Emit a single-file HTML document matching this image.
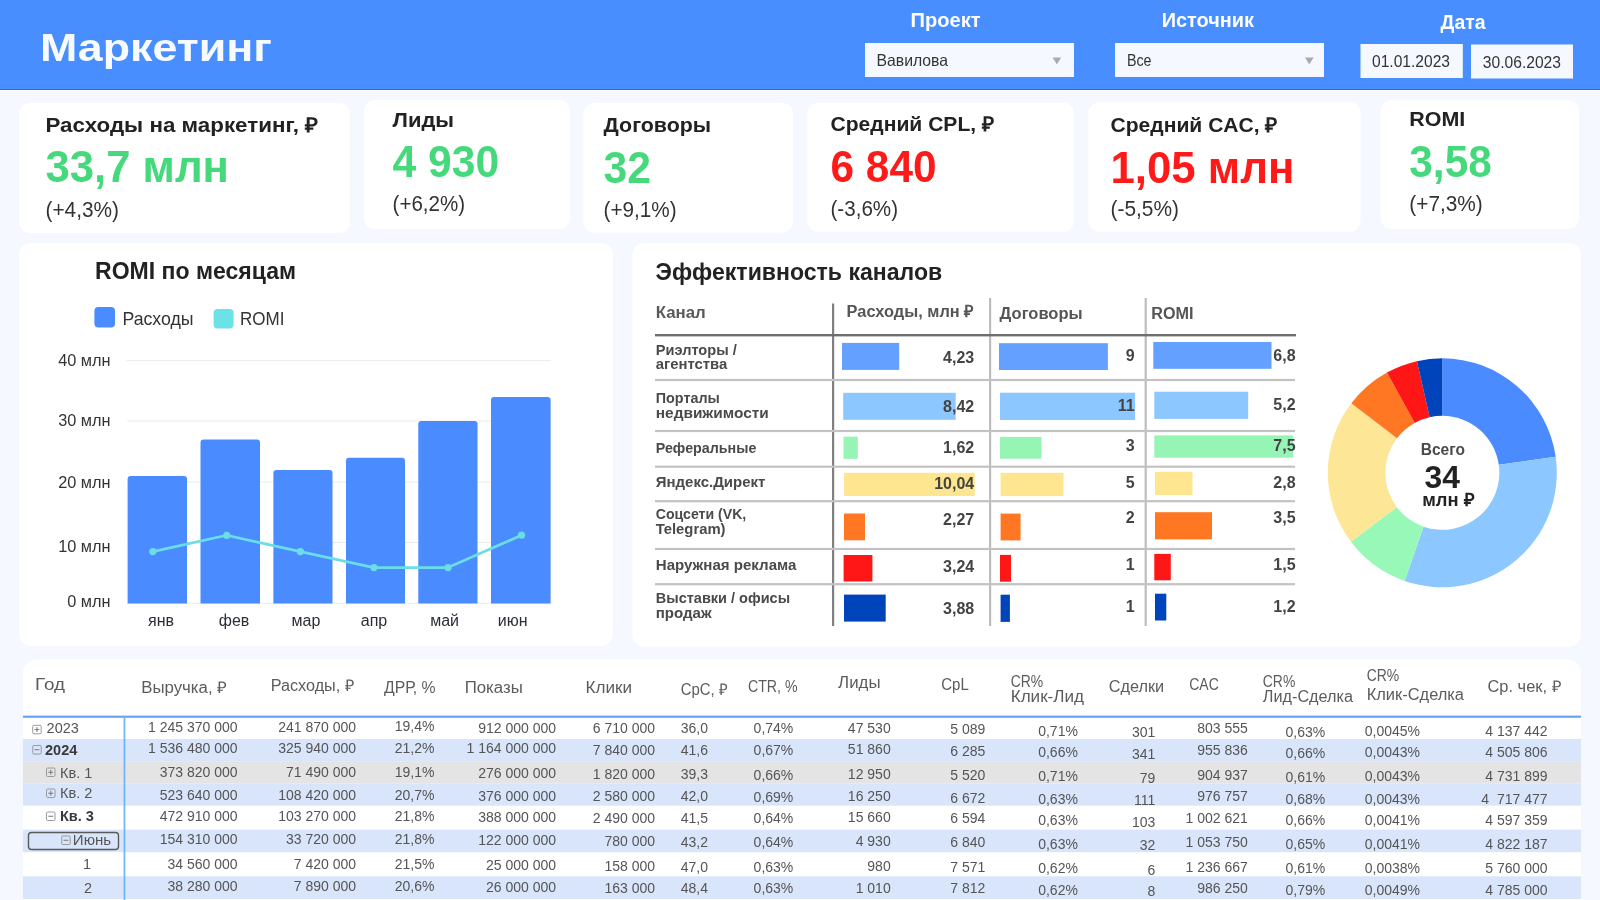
<!DOCTYPE html>
<html><head><meta charset="utf-8"><title>Маркетинг</title>
<style>html,body{margin:0;padding:0;background:#F5F9FF;overflow:hidden}svg{display:block;will-change:transform}text{font-family:"Liberation Sans",sans-serif}</style>
</head><body>
<svg width="1600" height="900" viewBox="0 0 1600 900">
<rect x="0.00" y="0.00" width="1600.00" height="900.00" rx="0" fill="#F5F9FF" />
<rect x="0.00" y="0.00" width="1600.00" height="89.00" rx="0" fill="#488EFF" />
<rect x="0.00" y="89.00" width="1600.00" height="1.00" rx="0" fill="#007BFF" />
<rect x="0.00" y="90.00" width="1600.00" height="1.00" rx="0" fill="#FFFFFF" />
<text x="40.00" y="61.00" font-size="39.50" fill="#F7FAFF" font-weight="700" text-anchor="start" textLength="232.00" lengthAdjust="spacingAndGlyphs" >Маркетинг</text>
<text x="910.60" y="27.30" font-size="19.50" fill="#FFFFFF" font-weight="700" text-anchor="start" textLength="70.00" lengthAdjust="spacingAndGlyphs" >Проект</text>
<text x="1161.70" y="27.30" font-size="19.50" fill="#FFFFFF" font-weight="700" text-anchor="start" textLength="92.30" lengthAdjust="spacingAndGlyphs" >Источник</text>
<text x="1440.60" y="28.60" font-size="19.50" fill="#FFFFFF" font-weight="700" text-anchor="start" textLength="45.00" lengthAdjust="spacingAndGlyphs" >Дата</text>
<rect x="865.00" y="43.00" width="209.00" height="34.00" rx="0" fill="#F5F9FF" />
<rect x="1115.00" y="43.00" width="209.00" height="34.00" rx="0" fill="#F5F9FF" />
<text x="876.50" y="66.00" font-size="16.50" fill="#333333" font-weight="400" text-anchor="start" textLength="71.60" lengthAdjust="spacingAndGlyphs" >Вавилова</text>
<text x="1126.90" y="66.00" font-size="16.50" fill="#333333" font-weight="400" text-anchor="start" textLength="24.70" lengthAdjust="spacingAndGlyphs" >Все</text>
<path d="M1052.6 57.5 L1061.2 57.5 L1056.9 64.4 Z" fill="#AAAAAA"/>
<path d="M1305 57.5 L1313.6 57.5 L1309.3 64.4 Z" fill="#AAAAAA"/>
<rect x="1360.50" y="44.00" width="102.30" height="34.00" rx="0" fill="#F5F9FF" />
<rect x="1471.00" y="44.50" width="102.00" height="34.00" rx="0" fill="#F5F9FF" />
<text x="1372.00" y="66.90" font-size="16.70" fill="#333333" font-weight="400" text-anchor="start" textLength="78.00" lengthAdjust="spacingAndGlyphs" >01.01.2023</text>
<text x="1482.80" y="67.50" font-size="16.70" fill="#333333" font-weight="400" text-anchor="start" textLength="78.20" lengthAdjust="spacingAndGlyphs" >30.06.2023</text>
<rect x="19.00" y="103.00" width="331.00" height="130.00" rx="11" fill="#FFFFFF" />
<text x="45.50" y="132.00" font-size="20.20" fill="#222222" font-weight="700" text-anchor="start" textLength="273.00" lengthAdjust="spacingAndGlyphs" >Расходы на маркетинг, ₽</text>
<text x="45.50" y="182.30" font-size="44.80" fill="#45D97B" font-weight="700" text-anchor="start" textLength="183.50" lengthAdjust="spacingAndGlyphs" >33,7 млн</text>
<text x="45.50" y="217.00" font-size="21.80" fill="#333333" font-weight="400" text-anchor="start" textLength="73.50" lengthAdjust="spacingAndGlyphs" >(+4,3%)</text>
<rect x="364.00" y="100.00" width="206.00" height="129.00" rx="11" fill="#FFFFFF" />
<text x="392.60" y="126.60" font-size="20.20" fill="#222222" font-weight="700" text-anchor="start" textLength="61.50" lengthAdjust="spacingAndGlyphs" >Лиды</text>
<text x="392.60" y="176.90" font-size="44.80" fill="#45D97B" font-weight="700" text-anchor="start" textLength="106.50" lengthAdjust="spacingAndGlyphs" >4 930</text>
<text x="392.60" y="211.00" font-size="21.80" fill="#333333" font-weight="400" text-anchor="start" textLength="72.50" lengthAdjust="spacingAndGlyphs" >(+6,2%)</text>
<rect x="583.50" y="103.00" width="209.50" height="129.50" rx="11" fill="#FFFFFF" />
<text x="603.60" y="132.20" font-size="20.20" fill="#222222" font-weight="700" text-anchor="start" textLength="107.50" lengthAdjust="spacingAndGlyphs" >Договоры</text>
<text x="603.60" y="182.55" font-size="44.80" fill="#45D97B" font-weight="700" text-anchor="start" textLength="47.50" lengthAdjust="spacingAndGlyphs" >32</text>
<text x="603.60" y="216.50" font-size="21.80" fill="#333333" font-weight="400" text-anchor="start" textLength="73.00" lengthAdjust="spacingAndGlyphs" >(+9,1%)</text>
<rect x="807.50" y="102.75" width="266.50" height="128.85" rx="11" fill="#FFFFFF" />
<text x="830.50" y="131.25" font-size="20.20" fill="#222222" font-weight="700" text-anchor="start" textLength="164.00" lengthAdjust="spacingAndGlyphs" >Средний CPL, ₽</text>
<text x="830.50" y="181.80" font-size="44.80" fill="#FF1A1A" font-weight="700" text-anchor="start" textLength="106.00" lengthAdjust="spacingAndGlyphs" >6 840</text>
<text x="830.50" y="216.00" font-size="21.80" fill="#333333" font-weight="400" text-anchor="start" textLength="67.50" lengthAdjust="spacingAndGlyphs" >(-3,6%)</text>
<rect x="1088.40" y="102.20" width="272.00" height="129.40" rx="11" fill="#FFFFFF" />
<text x="1110.50" y="132.00" font-size="20.20" fill="#222222" font-weight="700" text-anchor="start" textLength="167.50" lengthAdjust="spacingAndGlyphs" >Средний CAC, ₽</text>
<text x="1110.50" y="182.55" font-size="44.80" fill="#FF1A1A" font-weight="700" text-anchor="start" textLength="184.00" lengthAdjust="spacingAndGlyphs" >1,05 млн</text>
<text x="1110.50" y="216.00" font-size="21.80" fill="#333333" font-weight="400" text-anchor="start" textLength="68.50" lengthAdjust="spacingAndGlyphs" >(-5,5%)</text>
<rect x="1380.60" y="100.30" width="198.40" height="128.80" rx="11" fill="#FFFFFF" />
<text x="1409.30" y="126.20" font-size="20.20" fill="#222222" font-weight="700" text-anchor="start" textLength="56.00" lengthAdjust="spacingAndGlyphs" >ROMI</text>
<text x="1409.30" y="176.90" font-size="44.80" fill="#45D97B" font-weight="700" text-anchor="start" textLength="82.50" lengthAdjust="spacingAndGlyphs" >3,58</text>
<text x="1409.30" y="211.00" font-size="21.80" fill="#333333" font-weight="400" text-anchor="start" textLength="73.50" lengthAdjust="spacingAndGlyphs" >(+7,3%)</text>
<rect x="19.00" y="243.00" width="594.00" height="403.00" rx="12" fill="#FFFFFF" />
<text x="95.00" y="279.00" font-size="23.30" fill="#222222" font-weight="700" text-anchor="start" textLength="201.00" lengthAdjust="spacingAndGlyphs" >ROMI по месяцам</text>
<rect x="94.40" y="307.00" width="20.60" height="20.40" rx="4" fill="#4A8CFF" />
<text x="122.40" y="325.00" font-size="18.50" fill="#333333" font-weight="400" text-anchor="start" textLength="71.20" lengthAdjust="spacingAndGlyphs" >Расходы</text>
<rect x="213.60" y="309.00" width="20.00" height="19.40" rx="4" fill="#6AE2E8" />
<text x="240.00" y="325.00" font-size="18.50" fill="#333333" font-weight="400" text-anchor="start" textLength="44.40" lengthAdjust="spacingAndGlyphs" >ROMI</text>
<rect x="127.00" y="360.00" width="424.00" height="1.00" rx="0" fill="#EBEBEB" />
<text x="110.50" y="366.00" font-size="16.30" fill="#333333" font-weight="400" text-anchor="end" >40 млн</text>
<rect x="127.00" y="420.50" width="424.00" height="1.00" rx="0" fill="#EBEBEB" />
<text x="110.50" y="425.50" font-size="16.30" fill="#333333" font-weight="400" text-anchor="end" >30 млн</text>
<rect x="127.00" y="481.50" width="424.00" height="1.00" rx="0" fill="#EBEBEB" />
<text x="110.50" y="488.30" font-size="16.30" fill="#333333" font-weight="400" text-anchor="end" >20 млн</text>
<rect x="127.00" y="542.00" width="424.00" height="1.00" rx="0" fill="#EBEBEB" />
<text x="110.50" y="552.30" font-size="16.30" fill="#333333" font-weight="400" text-anchor="end" >10 млн</text>
<rect x="127.00" y="602.80" width="424.00" height="1.00" rx="0" fill="#EBEBEB" />
<text x="110.50" y="606.80" font-size="16.30" fill="#333333" font-weight="400" text-anchor="end" >0 млн</text>
<path d="M127.6 603.5 V479.0 Q127.6 476.0 130.6 476.0 H184.0 Q187.0 476.0 187.0 479.0 V603.5 Z" fill="#4A8CFF"/>
<path d="M200.5 603.5 V442.4 Q200.5 439.4 203.5 439.4 H257.0 Q260.0 439.4 260.0 442.4 V603.5 Z" fill="#4A8CFF"/>
<path d="M273.4 603.5 V473.0 Q273.4 470.0 276.4 470.0 H329.5 Q332.5 470.0 332.5 473.0 V603.5 Z" fill="#4A8CFF"/>
<path d="M346.0 603.5 V460.8 Q346.0 457.8 349.0 457.8 H402.0 Q405.0 457.8 405.0 460.8 V603.5 Z" fill="#4A8CFF"/>
<path d="M418.3 603.5 V424.0 Q418.3 421.0 421.3 421.0 H474.5 Q477.5 421.0 477.5 424.0 V603.5 Z" fill="#4A8CFF"/>
<path d="M491.0 603.5 V400.0 Q491.0 397.0 494.0 397.0 H547.6 Q550.6 397.0 550.6 400.0 V603.5 Z" fill="#4A8CFF"/>
<polyline points="152.8,551.6 226.7,535.3 300.4,551.6 374,567.6 448,567.6 521.5,535.2" fill="none" stroke="#6ADDE6" stroke-width="2.7" stroke-linejoin="round"/>
<circle cx="152.8" cy="551.6" r="3.6" fill="#6ADDE6"/>
<circle cx="226.7" cy="535.3" r="3.6" fill="#6ADDE6"/>
<circle cx="300.4" cy="551.6" r="3.6" fill="#6ADDE6"/>
<circle cx="374" cy="567.6" r="3.6" fill="#6ADDE6"/>
<circle cx="448" cy="567.6" r="3.6" fill="#6ADDE6"/>
<circle cx="521.5" cy="535.2" r="3.6" fill="#6ADDE6"/>
<text x="161.00" y="626.00" font-size="16.00" fill="#2A2F36" font-weight="400" text-anchor="middle" >янв</text>
<text x="234.00" y="626.00" font-size="16.00" fill="#2A2F36" font-weight="400" text-anchor="middle" >фев</text>
<text x="306.00" y="626.00" font-size="16.00" fill="#2A2F36" font-weight="400" text-anchor="middle" >мар</text>
<text x="374.00" y="626.00" font-size="16.00" fill="#2A2F36" font-weight="400" text-anchor="middle" >апр</text>
<text x="444.60" y="626.00" font-size="16.00" fill="#2A2F36" font-weight="400" text-anchor="middle" >май</text>
<text x="512.70" y="626.00" font-size="16.00" fill="#2A2F36" font-weight="400" text-anchor="middle" >июн</text>
<rect x="632.50" y="243.00" width="948.50" height="403.50" rx="12" fill="#FFFFFF" />
<text x="655.50" y="280.00" font-size="23.50" fill="#222222" font-weight="700" text-anchor="start" textLength="286.70" lengthAdjust="spacingAndGlyphs" >Эффективность каналов</text>
<text x="655.75" y="318.10" font-size="16.80" fill="#5A5A5A" font-weight="700" text-anchor="start" textLength="50.00" lengthAdjust="spacingAndGlyphs" >Канал</text>
<text x="846.60" y="316.50" font-size="16.80" fill="#555555" font-weight="700" text-anchor="start" textLength="127.40" lengthAdjust="spacingAndGlyphs" >Расходы, млн ₽</text>
<text x="999.60" y="318.90" font-size="16.80" fill="#555555" font-weight="700" text-anchor="start" textLength="83.00" lengthAdjust="spacingAndGlyphs" >Договоры</text>
<text x="1151.20" y="318.90" font-size="16.80" fill="#555555" font-weight="700" text-anchor="start" textLength="42.30" lengthAdjust="spacingAndGlyphs" >ROMI</text>
<rect x="832.00" y="303.50" width="2.20" height="322.50" rx="0" fill="#808080" />
<rect x="989.00" y="298.00" width="2.20" height="328.00" rx="0" fill="#BDBDBD" />
<rect x="1144.60" y="298.00" width="2.20" height="328.00" rx="0" fill="#BDBDBD" />
<rect x="655.00" y="334.00" width="641.00" height="2.40" rx="0" fill="#6E6E6E" />
<rect x="655.00" y="378.90" width="640.00" height="2.20" rx="0" fill="#C2C2C2" />
<rect x="655.00" y="429.90" width="640.00" height="2.20" rx="0" fill="#C2C2C2" />
<rect x="655.00" y="465.60" width="640.00" height="2.20" rx="0" fill="#C2C2C2" />
<rect x="655.00" y="500.10" width="640.00" height="2.20" rx="0" fill="#C2C2C2" />
<rect x="655.00" y="547.90" width="640.00" height="2.20" rx="0" fill="#C2C2C2" />
<rect x="655.00" y="583.10" width="640.00" height="2.20" rx="0" fill="#C2C2C2" />
<text x="655.75" y="355.25" font-size="14.50" fill="#4A4A4A" font-weight="700" text-anchor="start" textLength="81.00" lengthAdjust="spacingAndGlyphs" >Риэлторы /</text>
<text x="655.75" y="368.75" font-size="14.50" fill="#4A4A4A" font-weight="700" text-anchor="start" textLength="71.60" lengthAdjust="spacingAndGlyphs" >агентства</text>
<rect x="842.00" y="342.90" width="57.20" height="27.00" rx="0" fill="#64A0FF" />
<text x="974.20" y="363.10" font-size="16.00" fill="#444444" font-weight="700" text-anchor="end" >4,23</text>
<rect x="999.00" y="343.20" width="108.90" height="26.80" rx="0" fill="#64A0FF" />
<text x="1134.60" y="361.20" font-size="16.00" fill="#444444" font-weight="700" text-anchor="end" >9</text>
<rect x="1153.30" y="342.00" width="118.20" height="26.80" rx="0" fill="#64A0FF" />
<text x="1295.60" y="361.20" font-size="16.00" fill="#444444" font-weight="700" text-anchor="end" >6,8</text>
<text x="655.75" y="403.00" font-size="14.50" fill="#4A4A4A" font-weight="700" text-anchor="start" textLength="64.00" lengthAdjust="spacingAndGlyphs" >Порталы</text>
<text x="655.75" y="418.30" font-size="14.50" fill="#4A4A4A" font-weight="700" text-anchor="start" textLength="113.00" lengthAdjust="spacingAndGlyphs" >недвижимости</text>
<rect x="843.20" y="392.80" width="112.50" height="27.00" rx="0" fill="#8CC8FF" />
<text x="974.20" y="411.50" font-size="16.00" fill="#444444" font-weight="700" text-anchor="end" >8,42</text>
<rect x="1000.00" y="392.70" width="135.10" height="27.30" rx="0" fill="#8CC8FF" />
<text x="1134.60" y="410.70" font-size="16.00" fill="#444444" font-weight="700" text-anchor="end" >11</text>
<rect x="1154.30" y="391.70" width="93.90" height="27.20" rx="0" fill="#8CC8FF" />
<text x="1295.60" y="409.60" font-size="16.00" fill="#444444" font-weight="700" text-anchor="end" >5,2</text>
<text x="655.75" y="452.50" font-size="14.50" fill="#4A4A4A" font-weight="700" text-anchor="start" textLength="100.60" lengthAdjust="spacingAndGlyphs" >Реферальные</text>
<rect x="843.50" y="436.70" width="14.30" height="22.10" rx="0" fill="#96F5B4" />
<text x="974.20" y="452.50" font-size="16.00" fill="#444444" font-weight="700" text-anchor="end" >1,62</text>
<rect x="1000.00" y="436.90" width="41.50" height="21.80" rx="0" fill="#96F5B4" />
<text x="1134.60" y="450.50" font-size="16.00" fill="#444444" font-weight="700" text-anchor="end" >3</text>
<rect x="1154.30" y="435.40" width="138.80" height="22.30" rx="0" fill="#96F5B4" />
<text x="1295.60" y="450.50" font-size="16.00" fill="#444444" font-weight="700" text-anchor="end" >7,5</text>
<text x="655.75" y="486.50" font-size="14.50" fill="#4A4A4A" font-weight="700" text-anchor="start" textLength="109.60" lengthAdjust="spacingAndGlyphs" >Яндекс.Директ</text>
<rect x="844.10" y="472.80" width="130.70" height="23.20" rx="0" fill="#FDE68F" />
<text x="974.20" y="489.25" font-size="16.00" fill="#444444" font-weight="700" text-anchor="end" >10,04</text>
<rect x="1000.60" y="472.80" width="62.90" height="23.30" rx="0" fill="#FDE68F" />
<text x="1134.60" y="487.80" font-size="16.00" fill="#444444" font-weight="700" text-anchor="end" >5</text>
<rect x="1155.00" y="471.80" width="37.50" height="23.20" rx="0" fill="#FDE68F" />
<text x="1295.60" y="487.80" font-size="16.00" fill="#444444" font-weight="700" text-anchor="end" >2,8</text>
<text x="655.75" y="519.00" font-size="14.50" fill="#4A4A4A" font-weight="700" text-anchor="start" textLength="90.50" lengthAdjust="spacingAndGlyphs" >Соцсети (VK,</text>
<text x="655.75" y="534.25" font-size="14.50" fill="#4A4A4A" font-weight="700" text-anchor="start" textLength="69.80" lengthAdjust="spacingAndGlyphs" >Telegram)</text>
<rect x="844.00" y="513.50" width="21.00" height="26.80" rx="0" fill="#FF7722" />
<text x="974.20" y="525.25" font-size="16.00" fill="#444444" font-weight="700" text-anchor="end" >2,27</text>
<rect x="1000.60" y="513.60" width="20.00" height="26.80" rx="0" fill="#FF7722" />
<text x="1134.60" y="522.90" font-size="16.00" fill="#444444" font-weight="700" text-anchor="end" >2</text>
<rect x="1155.00" y="512.20" width="57.00" height="27.20" rx="0" fill="#FF7722" />
<text x="1295.60" y="522.90" font-size="16.00" fill="#444444" font-weight="700" text-anchor="end" >3,5</text>
<text x="655.75" y="570.25" font-size="14.50" fill="#4A4A4A" font-weight="700" text-anchor="start" textLength="140.60" lengthAdjust="spacingAndGlyphs" >Наружная реклама</text>
<rect x="843.60" y="555.00" width="28.80" height="26.50" rx="0" fill="#FF1717" />
<text x="974.20" y="571.80" font-size="16.00" fill="#444444" font-weight="700" text-anchor="end" >3,24</text>
<rect x="1000.00" y="554.90" width="11.00" height="26.80" rx="0" fill="#FF1717" />
<text x="1134.60" y="569.70" font-size="16.00" fill="#444444" font-weight="700" text-anchor="end" >1</text>
<rect x="1154.30" y="553.90" width="16.50" height="26.40" rx="0" fill="#FF1717" />
<text x="1295.60" y="569.70" font-size="16.00" fill="#444444" font-weight="700" text-anchor="end" >1,5</text>
<text x="655.75" y="602.90" font-size="14.50" fill="#4A4A4A" font-weight="700" text-anchor="start" textLength="134.30" lengthAdjust="spacingAndGlyphs" >Выставки / офисы</text>
<text x="655.75" y="617.50" font-size="14.50" fill="#4A4A4A" font-weight="700" text-anchor="start" textLength="55.80" lengthAdjust="spacingAndGlyphs" >продаж</text>
<rect x="844.00" y="594.60" width="41.70" height="27.00" rx="0" fill="#0044BB" />
<text x="974.20" y="613.70" font-size="16.00" fill="#444444" font-weight="700" text-anchor="end" >3,88</text>
<rect x="1000.60" y="594.70" width="9.30" height="27.20" rx="0" fill="#0044BB" />
<text x="1134.60" y="611.60" font-size="16.00" fill="#444444" font-weight="700" text-anchor="end" >1</text>
<rect x="1155.00" y="593.70" width="11.30" height="26.80" rx="0" fill="#0044BB" />
<text x="1295.60" y="611.60" font-size="16.00" fill="#444444" font-weight="700" text-anchor="end" >1,2</text>
<path d="M1442.30 358.30 A114.5 114.5 0 0 1 1555.69 456.86 L1498.75 464.87 A57 57 0 0 0 1442.30 415.80 Z" fill="#4A8CFF"/>
<path d="M1555.69 456.86 A114.5 114.5 0 0 1 1404.64 580.93 L1423.55 526.63 A57 57 0 0 0 1498.75 464.87 Z" fill="#8CC8FF"/>
<path d="M1404.64 580.93 A114.5 114.5 0 0 1 1350.98 541.87 L1396.84 507.18 A57 57 0 0 0 1423.55 526.63 Z" fill="#98F8B8"/>
<path d="M1350.98 541.87 A114.5 114.5 0 0 1 1351.34 403.26 L1397.02 438.18 A57 57 0 0 0 1396.84 507.18 Z" fill="#FDE796"/>
<path d="M1351.34 403.26 A114.5 114.5 0 0 1 1386.96 372.56 L1414.75 422.90 A57 57 0 0 0 1397.02 438.18 Z" fill="#FF7722"/>
<path d="M1386.96 372.56 A114.5 114.5 0 0 1 1416.93 361.15 L1429.67 417.22 A57 57 0 0 0 1414.75 422.90 Z" fill="#FF1717"/>
<path d="M1416.93 361.15 A114.5 114.5 0 0 1 1442.30 358.30 L1442.30 415.80 A57 57 0 0 0 1429.67 417.22 Z" fill="#0044BB"/>
<text x="1442.80" y="455.00" font-size="16.80" fill="#4A4A4A" font-weight="700" text-anchor="middle" textLength="44.20" lengthAdjust="spacingAndGlyphs" >Всего</text>
<text x="1442.30" y="487.80" font-size="32.00" fill="#222222" font-weight="700" text-anchor="middle" textLength="35.40" lengthAdjust="spacingAndGlyphs" >34</text>
<text x="1448.00" y="506.10" font-size="18.00" fill="#222222" font-weight="700" text-anchor="middle" textLength="51.70" lengthAdjust="spacingAndGlyphs" >млн ₽</text>
<rect x="23.00" y="659.50" width="1558.00" height="260.00" rx="14" fill="#FFFFFF" />
<text x="35.00" y="689.50" font-size="16.00" fill="#5C5C5C" font-weight="400" text-anchor="start" textLength="30.00" lengthAdjust="spacingAndGlyphs" >Год</text>
<text x="141.30" y="693.30" font-size="16.00" fill="#5C5C5C" font-weight="400" text-anchor="start" textLength="85.40" lengthAdjust="spacingAndGlyphs" >Выручка, ₽</text>
<text x="270.70" y="690.70" font-size="16.00" fill="#5C5C5C" font-weight="400" text-anchor="start" textLength="83.20" lengthAdjust="spacingAndGlyphs" >Расходы, ₽</text>
<text x="384.00" y="693.30" font-size="16.00" fill="#5C5C5C" font-weight="400" text-anchor="start" textLength="51.50" lengthAdjust="spacingAndGlyphs" >ДРР, %</text>
<text x="464.70" y="693.30" font-size="16.00" fill="#5C5C5C" font-weight="400" text-anchor="start" textLength="58.10" lengthAdjust="spacingAndGlyphs" >Показы</text>
<text x="585.50" y="693.30" font-size="16.00" fill="#5C5C5C" font-weight="400" text-anchor="start" textLength="46.60" lengthAdjust="spacingAndGlyphs" >Клики</text>
<text x="680.70" y="694.70" font-size="16.00" fill="#5C5C5C" font-weight="400" text-anchor="start" textLength="46.60" lengthAdjust="spacingAndGlyphs" >CpC, ₽</text>
<text x="747.90" y="691.50" font-size="16.00" fill="#5C5C5C" font-weight="400" text-anchor="start" textLength="49.60" lengthAdjust="spacingAndGlyphs" >CTR, %</text>
<text x="838.10" y="688.00" font-size="16.00" fill="#5C5C5C" font-weight="400" text-anchor="start" textLength="42.40" lengthAdjust="spacingAndGlyphs" >Лиды</text>
<text x="941.30" y="690.10" font-size="16.00" fill="#5C5C5C" font-weight="400" text-anchor="start" textLength="27.50" lengthAdjust="spacingAndGlyphs" >CpL</text>
<text x="1010.70" y="687.20" font-size="16.00" fill="#5C5C5C" font-weight="400" text-anchor="start" textLength="32.50" lengthAdjust="spacingAndGlyphs" >CR%</text>
<text x="1010.70" y="702.10" font-size="16.00" fill="#5C5C5C" font-weight="400" text-anchor="start" textLength="73.30" lengthAdjust="spacingAndGlyphs" >Клик-Лид</text>
<text x="1108.70" y="692.00" font-size="16.00" fill="#5C5C5C" font-weight="400" text-anchor="start" textLength="55.40" lengthAdjust="spacingAndGlyphs" >Сделки</text>
<text x="1189.20" y="689.90" font-size="16.00" fill="#5C5C5C" font-weight="400" text-anchor="start" textLength="29.60" lengthAdjust="spacingAndGlyphs" >CAC</text>
<text x="1262.80" y="686.70" font-size="16.00" fill="#5C5C5C" font-weight="400" text-anchor="start" textLength="32.50" lengthAdjust="spacingAndGlyphs" >CR%</text>
<text x="1262.80" y="702.10" font-size="16.00" fill="#5C5C5C" font-weight="400" text-anchor="start" textLength="90.20" lengthAdjust="spacingAndGlyphs" >Лид-Сделка</text>
<text x="1366.70" y="681.30" font-size="16.00" fill="#5C5C5C" font-weight="400" text-anchor="start" textLength="32.50" lengthAdjust="spacingAndGlyphs" >CR%</text>
<text x="1366.70" y="700.00" font-size="16.00" fill="#5C5C5C" font-weight="400" text-anchor="start" textLength="97.30" lengthAdjust="spacingAndGlyphs" >Клик-Сделка</text>
<text x="1487.50" y="692.00" font-size="16.00" fill="#5C5C5C" font-weight="400" text-anchor="start" textLength="73.30" lengthAdjust="spacingAndGlyphs" >Ср. чек, ₽</text>
<rect x="23.00" y="717.50" width="1558.00" height="21.50" rx="0" fill="#FFFFFF" />
<rect x="23.00" y="739.00" width="1558.00" height="22.20" rx="0" fill="#D8E5FB" />
<rect x="23.00" y="761.20" width="1558.00" height="22.20" rx="0" fill="#E4E4E4" />
<rect x="23.00" y="783.40" width="1558.00" height="22.40" rx="0" fill="#D8E5FB" />
<rect x="23.00" y="805.80" width="1558.00" height="23.80" rx="0" fill="#FFFFFF" />
<rect x="23.00" y="829.60" width="1558.00" height="22.80" rx="0" fill="#D8E5FB" />
<rect x="23.00" y="852.40" width="1558.00" height="23.90" rx="0" fill="#FFFFFF" />
<rect x="23.00" y="876.30" width="1558.00" height="22.70" rx="0" fill="#D8E5FB" />
<rect x="23.00" y="715.60" width="1558.00" height="2.20" rx="0" fill="#66A2F6" />
<rect x="123.60" y="718.00" width="1.70" height="182.00" rx="0" fill="#6CB4FB" />
<text x="237.50" y="731.50" font-size="14.00" fill="#555555" font-weight="400" text-anchor="end" >1 245 370 000</text>
<text x="237.50" y="753.30" font-size="14.00" fill="#555555" font-weight="400" text-anchor="end" >1 536 480 000</text>
<text x="237.50" y="777.30" font-size="14.00" fill="#555555" font-weight="400" text-anchor="end" >373 820 000</text>
<text x="237.50" y="800.00" font-size="14.00" fill="#555555" font-weight="400" text-anchor="end" >523 640 000</text>
<text x="237.50" y="820.80" font-size="14.00" fill="#555555" font-weight="400" text-anchor="end" >472 910 000</text>
<text x="237.50" y="844.00" font-size="14.00" fill="#555555" font-weight="400" text-anchor="end" >154 310 000</text>
<text x="237.50" y="869.30" font-size="14.00" fill="#555555" font-weight="400" text-anchor="end" >34 560 000</text>
<text x="237.50" y="890.70" font-size="14.00" fill="#555555" font-weight="400" text-anchor="end" >38 280 000</text>
<text x="356.00" y="731.50" font-size="14.00" fill="#555555" font-weight="400" text-anchor="end" >241 870 000</text>
<text x="356.00" y="753.30" font-size="14.00" fill="#555555" font-weight="400" text-anchor="end" >325 940 000</text>
<text x="356.00" y="777.30" font-size="14.00" fill="#555555" font-weight="400" text-anchor="end" >71 490 000</text>
<text x="356.00" y="800.00" font-size="14.00" fill="#555555" font-weight="400" text-anchor="end" >108 420 000</text>
<text x="356.00" y="820.80" font-size="14.00" fill="#555555" font-weight="400" text-anchor="end" >103 270 000</text>
<text x="356.00" y="844.00" font-size="14.00" fill="#555555" font-weight="400" text-anchor="end" >33 720 000</text>
<text x="356.00" y="869.30" font-size="14.00" fill="#555555" font-weight="400" text-anchor="end" >7 420 000</text>
<text x="356.00" y="890.70" font-size="14.00" fill="#555555" font-weight="400" text-anchor="end" >7 890 000</text>
<text x="434.50" y="730.70" font-size="14.00" fill="#555555" font-weight="400" text-anchor="end" >19,4%</text>
<text x="434.50" y="752.50" font-size="14.00" fill="#555555" font-weight="400" text-anchor="end" >21,2%</text>
<text x="434.50" y="777.30" font-size="14.00" fill="#555555" font-weight="400" text-anchor="end" >19,1%</text>
<text x="434.50" y="800.00" font-size="14.00" fill="#555555" font-weight="400" text-anchor="end" >20,7%</text>
<text x="434.50" y="820.80" font-size="14.00" fill="#555555" font-weight="400" text-anchor="end" >21,8%</text>
<text x="434.50" y="844.00" font-size="14.00" fill="#555555" font-weight="400" text-anchor="end" >21,8%</text>
<text x="434.50" y="869.30" font-size="14.00" fill="#555555" font-weight="400" text-anchor="end" >21,5%</text>
<text x="434.50" y="890.70" font-size="14.00" fill="#555555" font-weight="400" text-anchor="end" >20,6%</text>
<text x="556.00" y="732.50" font-size="14.00" fill="#555555" font-weight="400" text-anchor="end" >912 000 000</text>
<text x="556.00" y="753.30" font-size="14.00" fill="#555555" font-weight="400" text-anchor="end" >1 164 000 000</text>
<text x="556.00" y="778.10" font-size="14.00" fill="#555555" font-weight="400" text-anchor="end" >276 000 000</text>
<text x="556.00" y="800.80" font-size="14.00" fill="#555555" font-weight="400" text-anchor="end" >376 000 000</text>
<text x="556.00" y="821.90" font-size="14.00" fill="#555555" font-weight="400" text-anchor="end" >388 000 000</text>
<text x="556.00" y="845.30" font-size="14.00" fill="#555555" font-weight="400" text-anchor="end" >122 000 000</text>
<text x="556.00" y="870.10" font-size="14.00" fill="#555555" font-weight="400" text-anchor="end" >25 000 000</text>
<text x="556.00" y="891.50" font-size="14.00" fill="#555555" font-weight="400" text-anchor="end" >26 000 000</text>
<text x="655.00" y="733.30" font-size="14.00" fill="#555555" font-weight="400" text-anchor="end" >6 710 000</text>
<text x="655.00" y="755.20" font-size="14.00" fill="#555555" font-weight="400" text-anchor="end" >7 840 000</text>
<text x="655.00" y="779.20" font-size="14.00" fill="#555555" font-weight="400" text-anchor="end" >1 820 000</text>
<text x="655.00" y="801.30" font-size="14.00" fill="#555555" font-weight="400" text-anchor="end" >2 580 000</text>
<text x="655.00" y="822.70" font-size="14.00" fill="#555555" font-weight="400" text-anchor="end" >2 490 000</text>
<text x="655.00" y="845.90" font-size="14.00" fill="#555555" font-weight="400" text-anchor="end" >780 000</text>
<text x="655.00" y="871.20" font-size="14.00" fill="#555555" font-weight="400" text-anchor="end" >158 000</text>
<text x="655.00" y="892.50" font-size="14.00" fill="#555555" font-weight="400" text-anchor="end" >163 000</text>
<text x="708.00" y="733.30" font-size="14.00" fill="#555555" font-weight="400" text-anchor="end" >36,0</text>
<text x="708.00" y="755.20" font-size="14.00" fill="#555555" font-weight="400" text-anchor="end" >41,6</text>
<text x="708.00" y="779.20" font-size="14.00" fill="#555555" font-weight="400" text-anchor="end" >39,3</text>
<text x="708.00" y="801.30" font-size="14.00" fill="#555555" font-weight="400" text-anchor="end" >42,0</text>
<text x="708.00" y="822.70" font-size="14.00" fill="#555555" font-weight="400" text-anchor="end" >41,5</text>
<text x="708.00" y="846.70" font-size="14.00" fill="#555555" font-weight="400" text-anchor="end" >43,2</text>
<text x="708.00" y="872.00" font-size="14.00" fill="#555555" font-weight="400" text-anchor="end" >47,0</text>
<text x="708.00" y="892.50" font-size="14.00" fill="#555555" font-weight="400" text-anchor="end" >48,4</text>
<text x="793.30" y="733.30" font-size="14.00" fill="#555555" font-weight="400" text-anchor="end" >0,74%</text>
<text x="793.30" y="755.20" font-size="14.00" fill="#555555" font-weight="400" text-anchor="end" >0,67%</text>
<text x="793.30" y="780.00" font-size="14.00" fill="#555555" font-weight="400" text-anchor="end" >0,66%</text>
<text x="793.30" y="801.90" font-size="14.00" fill="#555555" font-weight="400" text-anchor="end" >0,69%</text>
<text x="793.30" y="823.20" font-size="14.00" fill="#555555" font-weight="400" text-anchor="end" >0,64%</text>
<text x="793.30" y="846.70" font-size="14.00" fill="#555555" font-weight="400" text-anchor="end" >0,64%</text>
<text x="793.30" y="872.00" font-size="14.00" fill="#555555" font-weight="400" text-anchor="end" >0,63%</text>
<text x="793.30" y="893.30" font-size="14.00" fill="#555555" font-weight="400" text-anchor="end" >0,63%</text>
<text x="890.70" y="732.50" font-size="14.00" fill="#555555" font-weight="400" text-anchor="end" >47 530</text>
<text x="890.70" y="753.90" font-size="14.00" fill="#555555" font-weight="400" text-anchor="end" >51 860</text>
<text x="890.70" y="778.70" font-size="14.00" fill="#555555" font-weight="400" text-anchor="end" >12 950</text>
<text x="890.70" y="800.80" font-size="14.00" fill="#555555" font-weight="400" text-anchor="end" >16 250</text>
<text x="890.70" y="821.90" font-size="14.00" fill="#555555" font-weight="400" text-anchor="end" >15 660</text>
<text x="890.70" y="845.90" font-size="14.00" fill="#555555" font-weight="400" text-anchor="end" >4 930</text>
<text x="890.70" y="870.70" font-size="14.00" fill="#555555" font-weight="400" text-anchor="end" >980</text>
<text x="890.70" y="892.50" font-size="14.00" fill="#555555" font-weight="400" text-anchor="end" >1 010</text>
<text x="985.30" y="734.10" font-size="14.00" fill="#555555" font-weight="400" text-anchor="end" >5 089</text>
<text x="985.30" y="755.50" font-size="14.00" fill="#555555" font-weight="400" text-anchor="end" >6 285</text>
<text x="985.30" y="780.00" font-size="14.00" fill="#555555" font-weight="400" text-anchor="end" >5 520</text>
<text x="985.30" y="802.70" font-size="14.00" fill="#555555" font-weight="400" text-anchor="end" >6 672</text>
<text x="985.30" y="823.20" font-size="14.00" fill="#555555" font-weight="400" text-anchor="end" >6 594</text>
<text x="985.30" y="846.70" font-size="14.00" fill="#555555" font-weight="400" text-anchor="end" >6 840</text>
<text x="985.30" y="872.00" font-size="14.00" fill="#555555" font-weight="400" text-anchor="end" >7 571</text>
<text x="985.30" y="893.30" font-size="14.00" fill="#555555" font-weight="400" text-anchor="end" >7 812</text>
<text x="1077.90" y="736.00" font-size="14.00" fill="#555555" font-weight="400" text-anchor="end" >0,71%</text>
<text x="1077.90" y="757.30" font-size="14.00" fill="#555555" font-weight="400" text-anchor="end" >0,66%</text>
<text x="1077.90" y="781.30" font-size="14.00" fill="#555555" font-weight="400" text-anchor="end" >0,71%</text>
<text x="1077.90" y="804.00" font-size="14.00" fill="#555555" font-weight="400" text-anchor="end" >0,63%</text>
<text x="1077.90" y="824.80" font-size="14.00" fill="#555555" font-weight="400" text-anchor="end" >0,63%</text>
<text x="1077.90" y="848.80" font-size="14.00" fill="#555555" font-weight="400" text-anchor="end" >0,63%</text>
<text x="1077.90" y="873.30" font-size="14.00" fill="#555555" font-weight="400" text-anchor="end" >0,62%</text>
<text x="1077.90" y="894.70" font-size="14.00" fill="#555555" font-weight="400" text-anchor="end" >0,62%</text>
<text x="1155.30" y="737.30" font-size="14.00" fill="#555555" font-weight="400" text-anchor="end" >301</text>
<text x="1155.30" y="758.70" font-size="14.00" fill="#555555" font-weight="400" text-anchor="end" >341</text>
<text x="1155.30" y="783.20" font-size="14.00" fill="#555555" font-weight="400" text-anchor="end" >79</text>
<text x="1155.30" y="805.30" font-size="14.00" fill="#555555" font-weight="400" text-anchor="end" >111</text>
<text x="1155.30" y="826.70" font-size="14.00" fill="#555555" font-weight="400" text-anchor="end" >103</text>
<text x="1155.30" y="849.90" font-size="14.00" fill="#555555" font-weight="400" text-anchor="end" >32</text>
<text x="1155.30" y="874.70" font-size="14.00" fill="#555555" font-weight="400" text-anchor="end" >6</text>
<text x="1155.30" y="896.00" font-size="14.00" fill="#555555" font-weight="400" text-anchor="end" >8</text>
<text x="1247.90" y="733.30" font-size="14.00" fill="#555555" font-weight="400" text-anchor="end" >803 555</text>
<text x="1247.90" y="755.20" font-size="14.00" fill="#555555" font-weight="400" text-anchor="end" >955 836</text>
<text x="1247.90" y="780.00" font-size="14.00" fill="#555555" font-weight="400" text-anchor="end" >904 937</text>
<text x="1247.90" y="801.30" font-size="14.00" fill="#555555" font-weight="400" text-anchor="end" >976 757</text>
<text x="1247.90" y="823.20" font-size="14.00" fill="#555555" font-weight="400" text-anchor="end" >1 002 621</text>
<text x="1247.90" y="846.70" font-size="14.00" fill="#555555" font-weight="400" text-anchor="end" >1 053 750</text>
<text x="1247.90" y="872.00" font-size="14.00" fill="#555555" font-weight="400" text-anchor="end" >1 236 667</text>
<text x="1247.90" y="893.30" font-size="14.00" fill="#555555" font-weight="400" text-anchor="end" >986 250</text>
<text x="1325.20" y="736.50" font-size="14.00" fill="#555555" font-weight="400" text-anchor="end" >0,63%</text>
<text x="1325.20" y="757.90" font-size="14.00" fill="#555555" font-weight="400" text-anchor="end" >0,66%</text>
<text x="1325.20" y="781.90" font-size="14.00" fill="#555555" font-weight="400" text-anchor="end" >0,61%</text>
<text x="1325.20" y="804.00" font-size="14.00" fill="#555555" font-weight="400" text-anchor="end" >0,68%</text>
<text x="1325.20" y="825.30" font-size="14.00" fill="#555555" font-weight="400" text-anchor="end" >0,66%</text>
<text x="1325.20" y="848.80" font-size="14.00" fill="#555555" font-weight="400" text-anchor="end" >0,65%</text>
<text x="1325.20" y="873.30" font-size="14.00" fill="#555555" font-weight="400" text-anchor="end" >0,61%</text>
<text x="1325.20" y="894.70" font-size="14.00" fill="#555555" font-weight="400" text-anchor="end" >0,79%</text>
<text x="1420.00" y="736.00" font-size="14.00" fill="#555555" font-weight="400" text-anchor="end" >0,0045%</text>
<text x="1420.00" y="757.30" font-size="14.00" fill="#555555" font-weight="400" text-anchor="end" >0,0043%</text>
<text x="1420.00" y="781.30" font-size="14.00" fill="#555555" font-weight="400" text-anchor="end" >0,0043%</text>
<text x="1420.00" y="804.00" font-size="14.00" fill="#555555" font-weight="400" text-anchor="end" >0,0043%</text>
<text x="1420.00" y="824.80" font-size="14.00" fill="#555555" font-weight="400" text-anchor="end" >0,0041%</text>
<text x="1420.00" y="848.80" font-size="14.00" fill="#555555" font-weight="400" text-anchor="end" >0,0041%</text>
<text x="1420.00" y="873.30" font-size="14.00" fill="#555555" font-weight="400" text-anchor="end" >0,0038%</text>
<text x="1420.00" y="894.70" font-size="14.00" fill="#555555" font-weight="400" text-anchor="end" >0,0049%</text>
<text x="1547.50" y="736.00" font-size="14.00" fill="#555555" font-weight="400" text-anchor="end" >4 137 442</text>
<text x="1547.50" y="757.30" font-size="14.00" fill="#555555" font-weight="400" text-anchor="end" >4 505 806</text>
<text x="1547.50" y="781.30" font-size="14.00" fill="#555555" font-weight="400" text-anchor="end" >4 731 899</text>
<text x="1547.50" y="804.00" font-size="14.00" fill="#555555" font-weight="400" text-anchor="end" >4  717 477</text>
<text x="1547.50" y="824.80" font-size="14.00" fill="#555555" font-weight="400" text-anchor="end" >4 597 359</text>
<text x="1547.50" y="848.80" font-size="14.00" fill="#555555" font-weight="400" text-anchor="end" >4 822 187</text>
<text x="1547.50" y="873.30" font-size="14.00" fill="#555555" font-weight="400" text-anchor="end" >5 760 000</text>
<text x="1547.50" y="894.70" font-size="14.00" fill="#555555" font-weight="400" text-anchor="end" >4 785 000</text>
<rect x="32.70" y="725.30" width="8.50" height="8.50" rx="1.2" fill="none" stroke="#9A9A9A" stroke-width="1"/>
<path d="M34.50 729.55 H39.40" stroke="#777" stroke-width="1"/>
<path d="M36.95 727.10 V732.00" stroke="#777" stroke-width="1"/>
<text x="46.60" y="733.00" font-size="14.50" fill="#555555" font-weight="400" text-anchor="start" >2023</text>
<rect x="32.70" y="745.50" width="8.50" height="8.50" rx="1.2" fill="none" stroke="#9A9A9A" stroke-width="1"/>
<path d="M34.50 749.75 H39.40" stroke="#777" stroke-width="1"/>
<text x="45.00" y="755.00" font-size="14.50" fill="#3A3A3A" font-weight="700" text-anchor="start" >2024</text>
<rect x="46.50" y="768.00" width="8.50" height="8.50" rx="1.2" fill="none" stroke="#9A9A9A" stroke-width="1"/>
<path d="M48.30 772.25 H53.20" stroke="#777" stroke-width="1"/>
<path d="M50.75 769.80 V774.70" stroke="#777" stroke-width="1"/>
<text x="60.00" y="777.50" font-size="14.50" fill="#555555" font-weight="400" text-anchor="start" >Кв. 1</text>
<rect x="46.50" y="789.00" width="8.50" height="8.50" rx="1.2" fill="none" stroke="#9A9A9A" stroke-width="1"/>
<path d="M48.30 793.25 H53.20" stroke="#777" stroke-width="1"/>
<path d="M50.75 790.80 V795.70" stroke="#777" stroke-width="1"/>
<text x="60.00" y="798.20" font-size="14.50" fill="#555555" font-weight="400" text-anchor="start" >Кв. 2</text>
<rect x="46.50" y="812.00" width="8.50" height="8.50" rx="1.2" fill="none" stroke="#9A9A9A" stroke-width="1"/>
<path d="M48.30 816.25 H53.20" stroke="#777" stroke-width="1"/>
<text x="60.00" y="820.80" font-size="14.50" fill="#3A3A3A" font-weight="700" text-anchor="start" >Кв. 3</text>
<rect x="28.5" y="832.5" width="90" height="17" rx="3" fill="none" stroke="#5A5A5A" stroke-width="1.4"/>
<rect x="61.70" y="836.00" width="8.50" height="8.50" rx="1.2" fill="none" stroke="#9A9A9A" stroke-width="1"/>
<path d="M63.50 840.25 H68.40" stroke="#777" stroke-width="1"/>
<text x="72.80" y="844.70" font-size="14.50" fill="#555555" font-weight="400" text-anchor="start" textLength="38.30" lengthAdjust="spacingAndGlyphs" >Июнь</text>
<text x="91.00" y="868.70" font-size="14.50" fill="#555555" font-weight="400" text-anchor="end" >1</text>
<text x="92.00" y="892.60" font-size="14.50" fill="#555555" font-weight="400" text-anchor="end" >2</text>
</svg>
</body></html>
